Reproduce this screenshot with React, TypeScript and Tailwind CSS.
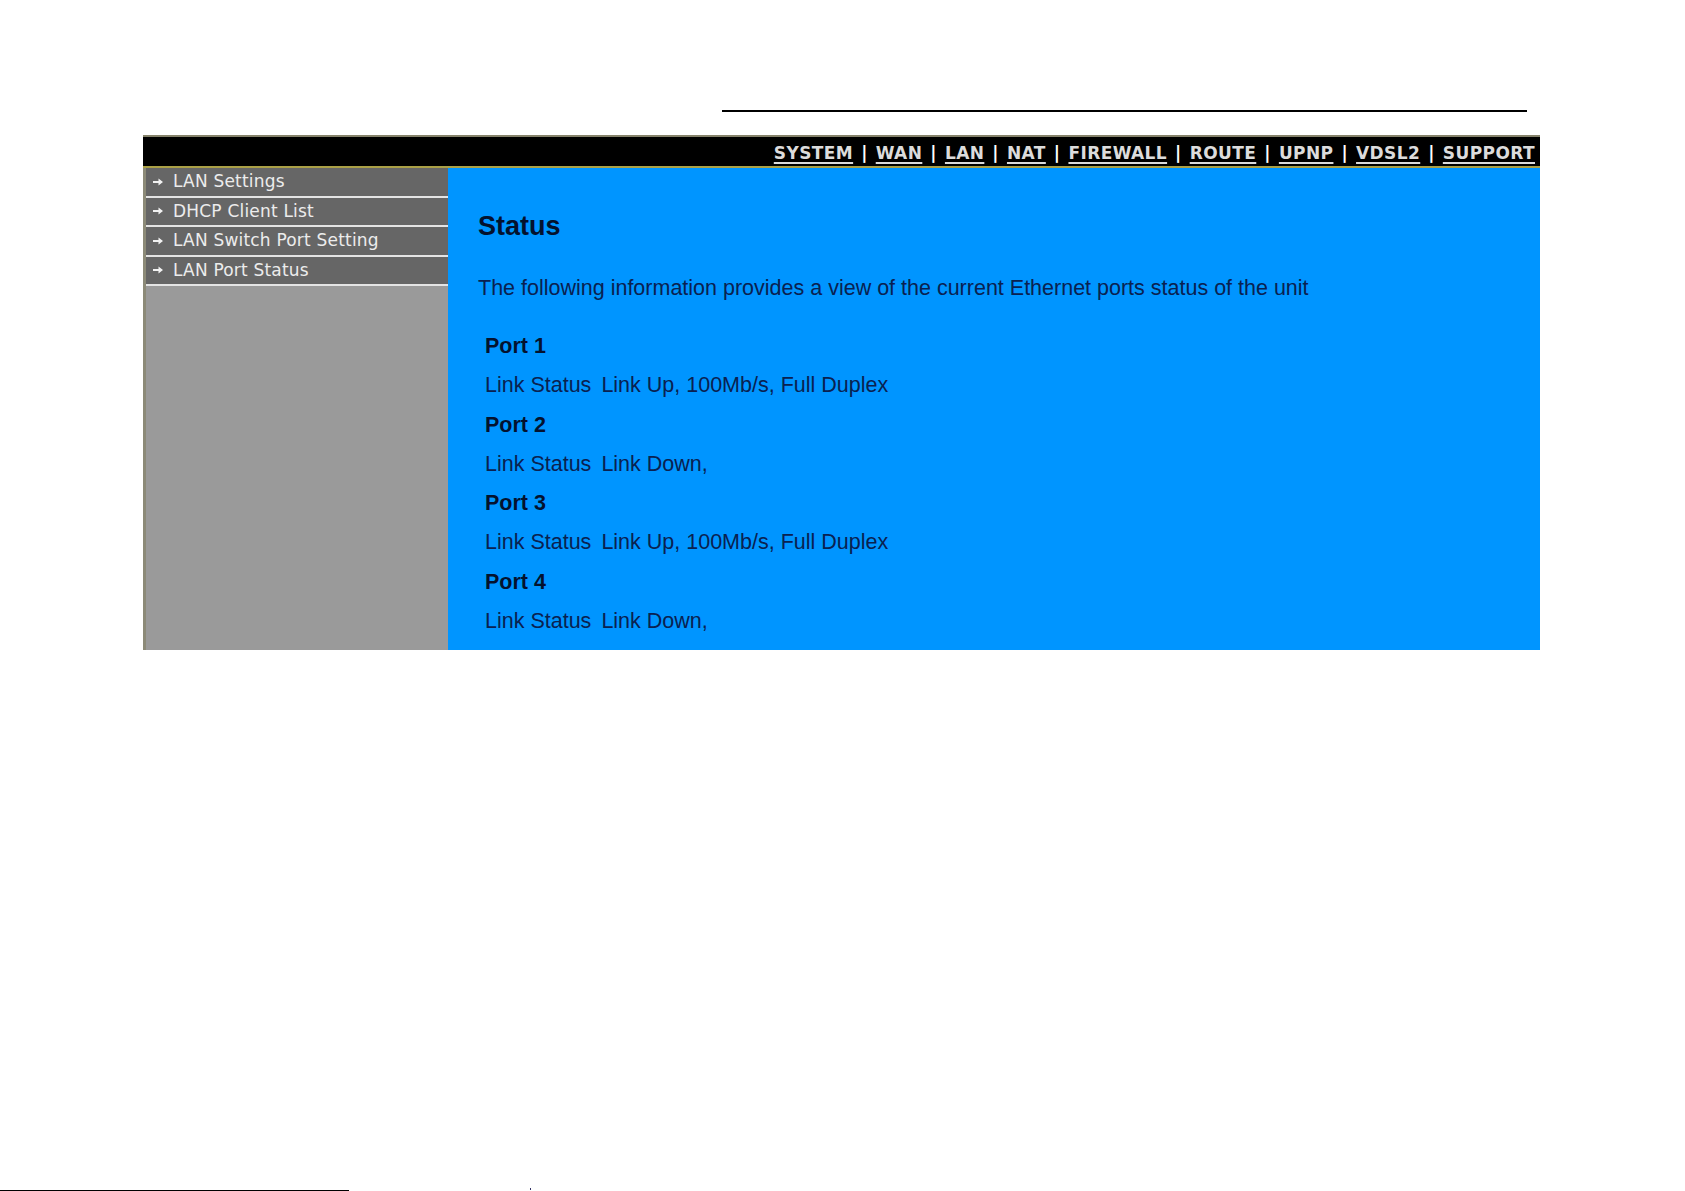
const navItems = ["SYSTEM", "WAN", "LAN", "NAT", "FIREWALL", "ROUTE", "UPNP", "VDSL2", "SUPPORT"];

const menuItems = ["LAN Settings", "DHCP Client List", "LAN Switch Port Setting", "LAN Port Status"];

const ports = [
  { name: "Port 1", status: "Link Up, 100Mb/s, Full Duplex" },
  { name: "Port 2", status: "Link Down," },
  { name: "Port 3", status: "Link Up, 100Mb/s, Full Duplex" },
  { name: "Port 4", status: "Link Down," },
];

function Arrow() {
  return (
    <svg width="10" height="8" viewBox="0 0 10 8" className="shrink-0" aria-hidden="true">
      <path d="M0 3h5.5V0.5L10 4 5.5 7.5V5H0z" fill="#f2f2f2" />
    </svg>
  );
}

export default function App() {
  return (
    <div className="flex h-[1191px] flex-col overflow-hidden bg-white">
      <div className="ml-[722px] mt-[110px] h-[2px] w-[805px] bg-black" />

      <div className="ml-[143px] mt-[23px] w-[1397px]">
        <div className="flex h-[33px] items-center justify-end border-y-2 border-t-[#85826a] border-b-[#aaa046] bg-black pr-[5px] pt-[5px] font-['DejaVu_Sans',sans-serif] text-[17px] font-bold tracking-[0.4px] text-[#dcdcdc]">
          {navItems.map((item, i) => (
            <span key={item} className="flex items-center">
              {i > 0 && <span className="px-[8px] text-white">|</span>}
              <span className="underline decoration-[1.5px] underline-offset-[3px]">{item}</span>
            </span>
          ))}
        </div>

        <div className="flex h-[482px]">
          <div className="flex w-[305px] flex-col border-l-[3px] border-[#8c8a78] bg-[#9a9a9a]">
            {menuItems.map((item) => (
              <div
                key={item}
                className="flex h-[29.5px] items-center gap-[10px] border-b-2 border-[#e4e4e4] bg-[#666666] pl-[7px] font-['DejaVu_Sans',sans-serif] text-[17px] tracking-[0.2px] text-[#ececec]"
              >
                <Arrow />
                <span>{item}</span>
              </div>
            ))}
          </div>

          <div className="flex-1 bg-[#0095ff] pl-[30px] pt-[43px] font-['Liberation_Sans',Arial,sans-serif] text-[#0a2150]">
            <h1 className="text-[27px] font-bold leading-[30px] text-[#04122e]">Status</h1>
            <p className="mt-[35px] text-[21.5px] leading-[24px]">
              The following information provides a view of the current Ethernet ports status of the unit
            </p>
            <div className="mt-[27px] pl-[7px] text-[21.5px] leading-[39.3px]">
              {ports.map((port) => (
                <div key={port.name}>
                  <div className="font-bold text-[#04122e]">{port.name}</div>
                  <div className="flex gap-[10px]">
                    <span>Link Status</span>
                    <span>{port.status}</span>
                  </div>
                </div>
              ))}
            </div>
          </div>
        </div>
      </div>

      <div className="mt-auto flex items-end">
        <div className="h-px w-[349px] bg-black" />
        <div className="mb-[1px] ml-[181px] h-[2px] w-[1px] bg-[#333366]" />
      </div>
    </div>
  );
}
